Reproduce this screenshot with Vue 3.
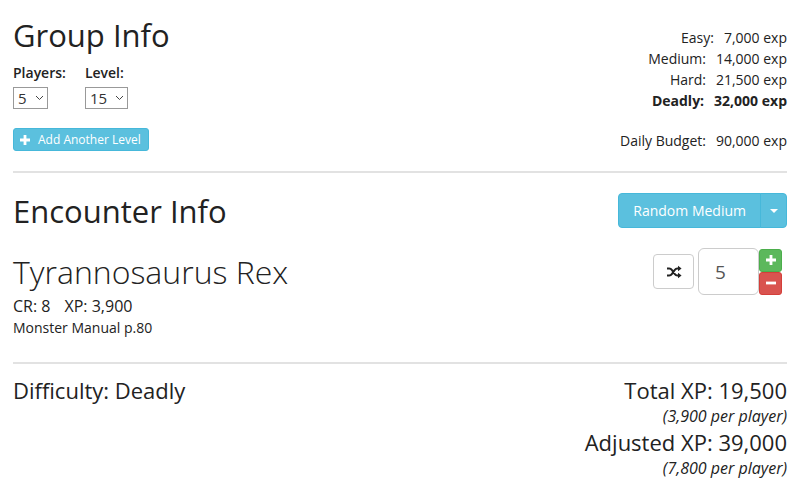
<script setup>
import { ref, computed } from 'vue'

const players = ref(5)
const level = ref(15)
const quantity = ref(5)
const budgets = [
  { name: 'Easy', exp: '7,000' },
  { name: 'Medium', exp: '14,000' },
  { name: 'Hard', exp: '21,500' },
  { name: 'Deadly', exp: '32,000', active: true },
]
const total = computed(() => quantity.value * 3900)
const adjusted = computed(() => total.value * 2)
const format = (n) => n.toLocaleString('en-US')
</script>

<template>
  <main class="page">
    <section class="group">
      <div>
        <h2>Group Info</h2>
        <div class="fields">
          <div class="field">
            <label for="players">Players:</label>
            <span class="picker small">
              <select id="players" v-model="players">
                <option v-for="n in 12" :key="n" :value="n">{{ n }}</option>
              </select>
              <svg viewBox="0 0 9 6" width="9" height="6" aria-hidden="true"><path d="M1 1l3.5 3.5L8 1" /></svg>
            </span>
          </div>
          <div class="field">
            <label for="level">Level:</label>
            <span class="picker">
              <select id="level" v-model="level">
                <option v-for="n in 20" :key="n" :value="n">{{ n }}</option>
              </select>
              <svg viewBox="0 0 9 6" width="9" height="6" aria-hidden="true"><path d="M1 1l3.5 3.5L8 1" /></svg>
            </span>
          </div>
        </div>
        <button type="button" class="btn info add">
          <svg viewBox="0 0 10 10" width="10" height="10" aria-hidden="true"><path d="M3.6 0h2.8v3.6H10v2.8H6.4V10H3.6V6.4H0V3.6h3.6z" /></svg>
          Add Another Level
        </button>
      </div>
      <div class="budgets">
        <div v-for="b in budgets" :key="b.name" class="budget" :class="{ active: b.active }">
          <span>{{ b.name }}:</span><span>{{ b.exp }} exp</span>
        </div>
        <div class="budget daily"><span>Daily Budget:</span><span>90,000 exp</span></div>
      </div>
    </section>

    <hr />

    <section class="encounter">
      <div class="bar">
        <h2>Encounter Info</h2>
        <div class="split">
          <button type="button" class="btn info random">Random Medium</button>
          <button type="button" class="btn info toggle" aria-label="Choose difficulty">
            <svg viewBox="0 0 8 4" width="8" height="4" aria-hidden="true"><path d="M0 0h8L4 4z" /></svg>
          </button>
        </div>
      </div>
      <div class="monster">
        <div>
          <h3>Tyrannosaurus Rex</h3>
          <div class="stats"><span>CR: 8</span><span>XP: 3,900</span></div>
          <div class="source">Monster Manual p.80</div>
        </div>
        <div class="controls">
          <button type="button" class="btn shuffle" aria-label="Swap monster">
            <svg viewBox="0 0 16 14" width="16" height="14" aria-hidden="true">
              <path class="line" d="M1 3.5h2.2c1.3 0 2 .6 2.8 1.7l2.6 3.6c.8 1.1 1.5 1.7 2.8 1.7H13M1 10.5h2.2c1.3 0 2-.6 2.8-1.7l2.6-3.6c.8-1.1 1.5-1.7 2.8-1.7H13" />
              <path d="M12 .8L15.6 3.5 12 6.2zM12 7.8l3.6 2.7L12 13.2z" />
            </svg>
          </button>
          <input v-model.number="quantity" type="text" aria-label="Quantity" />
          <div class="steps">
            <button type="button" class="btn plus" aria-label="Add one" @click="quantity++">
              <svg viewBox="0 0 10 10" width="10" height="10" aria-hidden="true"><path d="M3.6 0h2.8v3.6H10v2.8H6.4V10H3.6V6.4H0V3.6h3.6z" /></svg>
            </button>
            <button type="button" class="btn minus" aria-label="Remove one" @click="quantity--">
              <svg viewBox="0 0 10 10" width="10" height="10" aria-hidden="true"><path d="M0 3.6h10v2.8H0z" /></svg>
            </button>
          </div>
        </div>
      </div>
    </section>

    <hr />

    <section class="summary">
      <div class="large">Difficulty: Deadly</div>
      <div class="totals">
        <div class="large">Total XP: {{ format(total) }}</div>
        <em>({{ format(total / 5) }} per player)</em>
        <div class="large">Adjusted XP: {{ format(adjusted) }}</div>
        <em>({{ format(adjusted / 5) }} per player)</em>
      </div>
    </section>
  </main>
</template>

<style>
body {
  margin: 0;
  background: #fff;
}
</style>

<style scoped>
.page {
  padding: 14px 13px 0;
  font: 14px/21px "Open Sans", sans-serif;
  color: #222;
}
.page * {
  box-sizing: border-box;
}
h2,
h3 {
  margin: 0;
  font-size: 31px;
  line-height: 42px;
  font-weight: 400;
}
h3 {
  font-size: 32px;
  font-weight: 300;
}
hr {
  height: 2px;
  margin: 0;
  border: 0;
  background: #e2e2e2;
}
svg {
  display: block;
  fill: currentColor;
}
.group {
  display: flex;
  justify-content: space-between;
  padding-bottom: 20px;
}
.fields {
  display: flex;
  gap: 19px;
  margin: 6px 0 19px;
}
.field label {
  display: block;
  font-weight: 600;
  margin-bottom: 4px;
}
.picker {
  display: grid;
  align-items: center;
  width: 43px;
}
.picker.small {
  width: 35px;
}
.picker > * {
  grid-area: 1 / 1;
}
.picker svg {
  justify-self: end;
  margin-right: 4px;
  fill: none;
  stroke: #444;
  pointer-events: none;
}
select {
  appearance: none;
  width: 100%;
  height: 22px;
  padding: 0 0 0 4px;
  border: 1px solid #999;
  border-radius: 0;
  background: #fff;
  color: #333;
  font: 15px/20px "Open Sans", sans-serif;
}
.btn {
  display: flex;
  align-items: center;
  justify-content: center;
  margin: 0;
  padding: 0;
  border: 1px solid;
  border-radius: 4px;
  color: #fff;
  font: 14px/20px "Open Sans", sans-serif;
}
.info {
  background: #5bc0de;
  border-color: #46b8da;
}
.add {
  gap: 8px;
  height: 23px;
  padding: 0 7px 0 6px;
  border-radius: 3px;
  font-size: 12px;
}
.budgets {
  padding-top: 13px;
}
.budget {
  display: flex;
  justify-content: flex-end;
  gap: 10px;
}
.active {
  font-weight: 700;
}
.daily {
  margin-top: 19px;
}
.encounter {
  padding: 20px 0 24px;
}
.bar,
.monster {
  display: flex;
  justify-content: space-between;
}
.bar h2 {
  line-height: 36px;
}
.split {
  display: flex;
}
.random {
  height: 35px;
  padding: 0 14px;
  border-radius: 4px 0 0 4px;
}
.toggle {
  width: 27px;
  height: 35px;
  margin-left: -1px;
  border-radius: 0 4px 4px 0;
}
.monster {
  margin-top: 19px;
}
.monster h3 {
  line-height: 47px;
}
.stats {
  display: flex;
  gap: 14px;
  font-size: 16px;
  line-height: 22px;
}
.controls {
  display: flex;
  align-self: flex-start;
  align-items: center;
  padding-right: 5px;
}
.shuffle {
  width: 41px;
  height: 35px;
  margin-right: 4px;
  background: #fff;
  border-color: #ccc;
  color: #222;
}
.line {
  fill: none;
  stroke: currentColor;
  stroke-width: 2;
}
input {
  width: 61px;
  height: 47px;
  padding: 0 16px;
  border: 1px solid #ccc;
  border-radius: 6px;
  background: #fff;
  color: #555;
  font: 19px/24px "Open Sans", sans-serif;
}
.steps .btn {
  width: 23px;
  height: 23px;
  border-radius: 3px;
}
.steps .plus {
  background: #5cb85c;
  border-color: #4cae4c;
}
.steps .minus {
  background: #d9534f;
  border-color: #d43f3a;
}
.summary {
  display: flex;
  justify-content: space-between;
  padding-top: 11px;
}
.large {
  font-size: 22px;
  line-height: 30px;
}
.totals {
  text-align: right;
}
.totals em {
  display: block;
  font-size: 16px;
  line-height: 22px;
}
</style>
